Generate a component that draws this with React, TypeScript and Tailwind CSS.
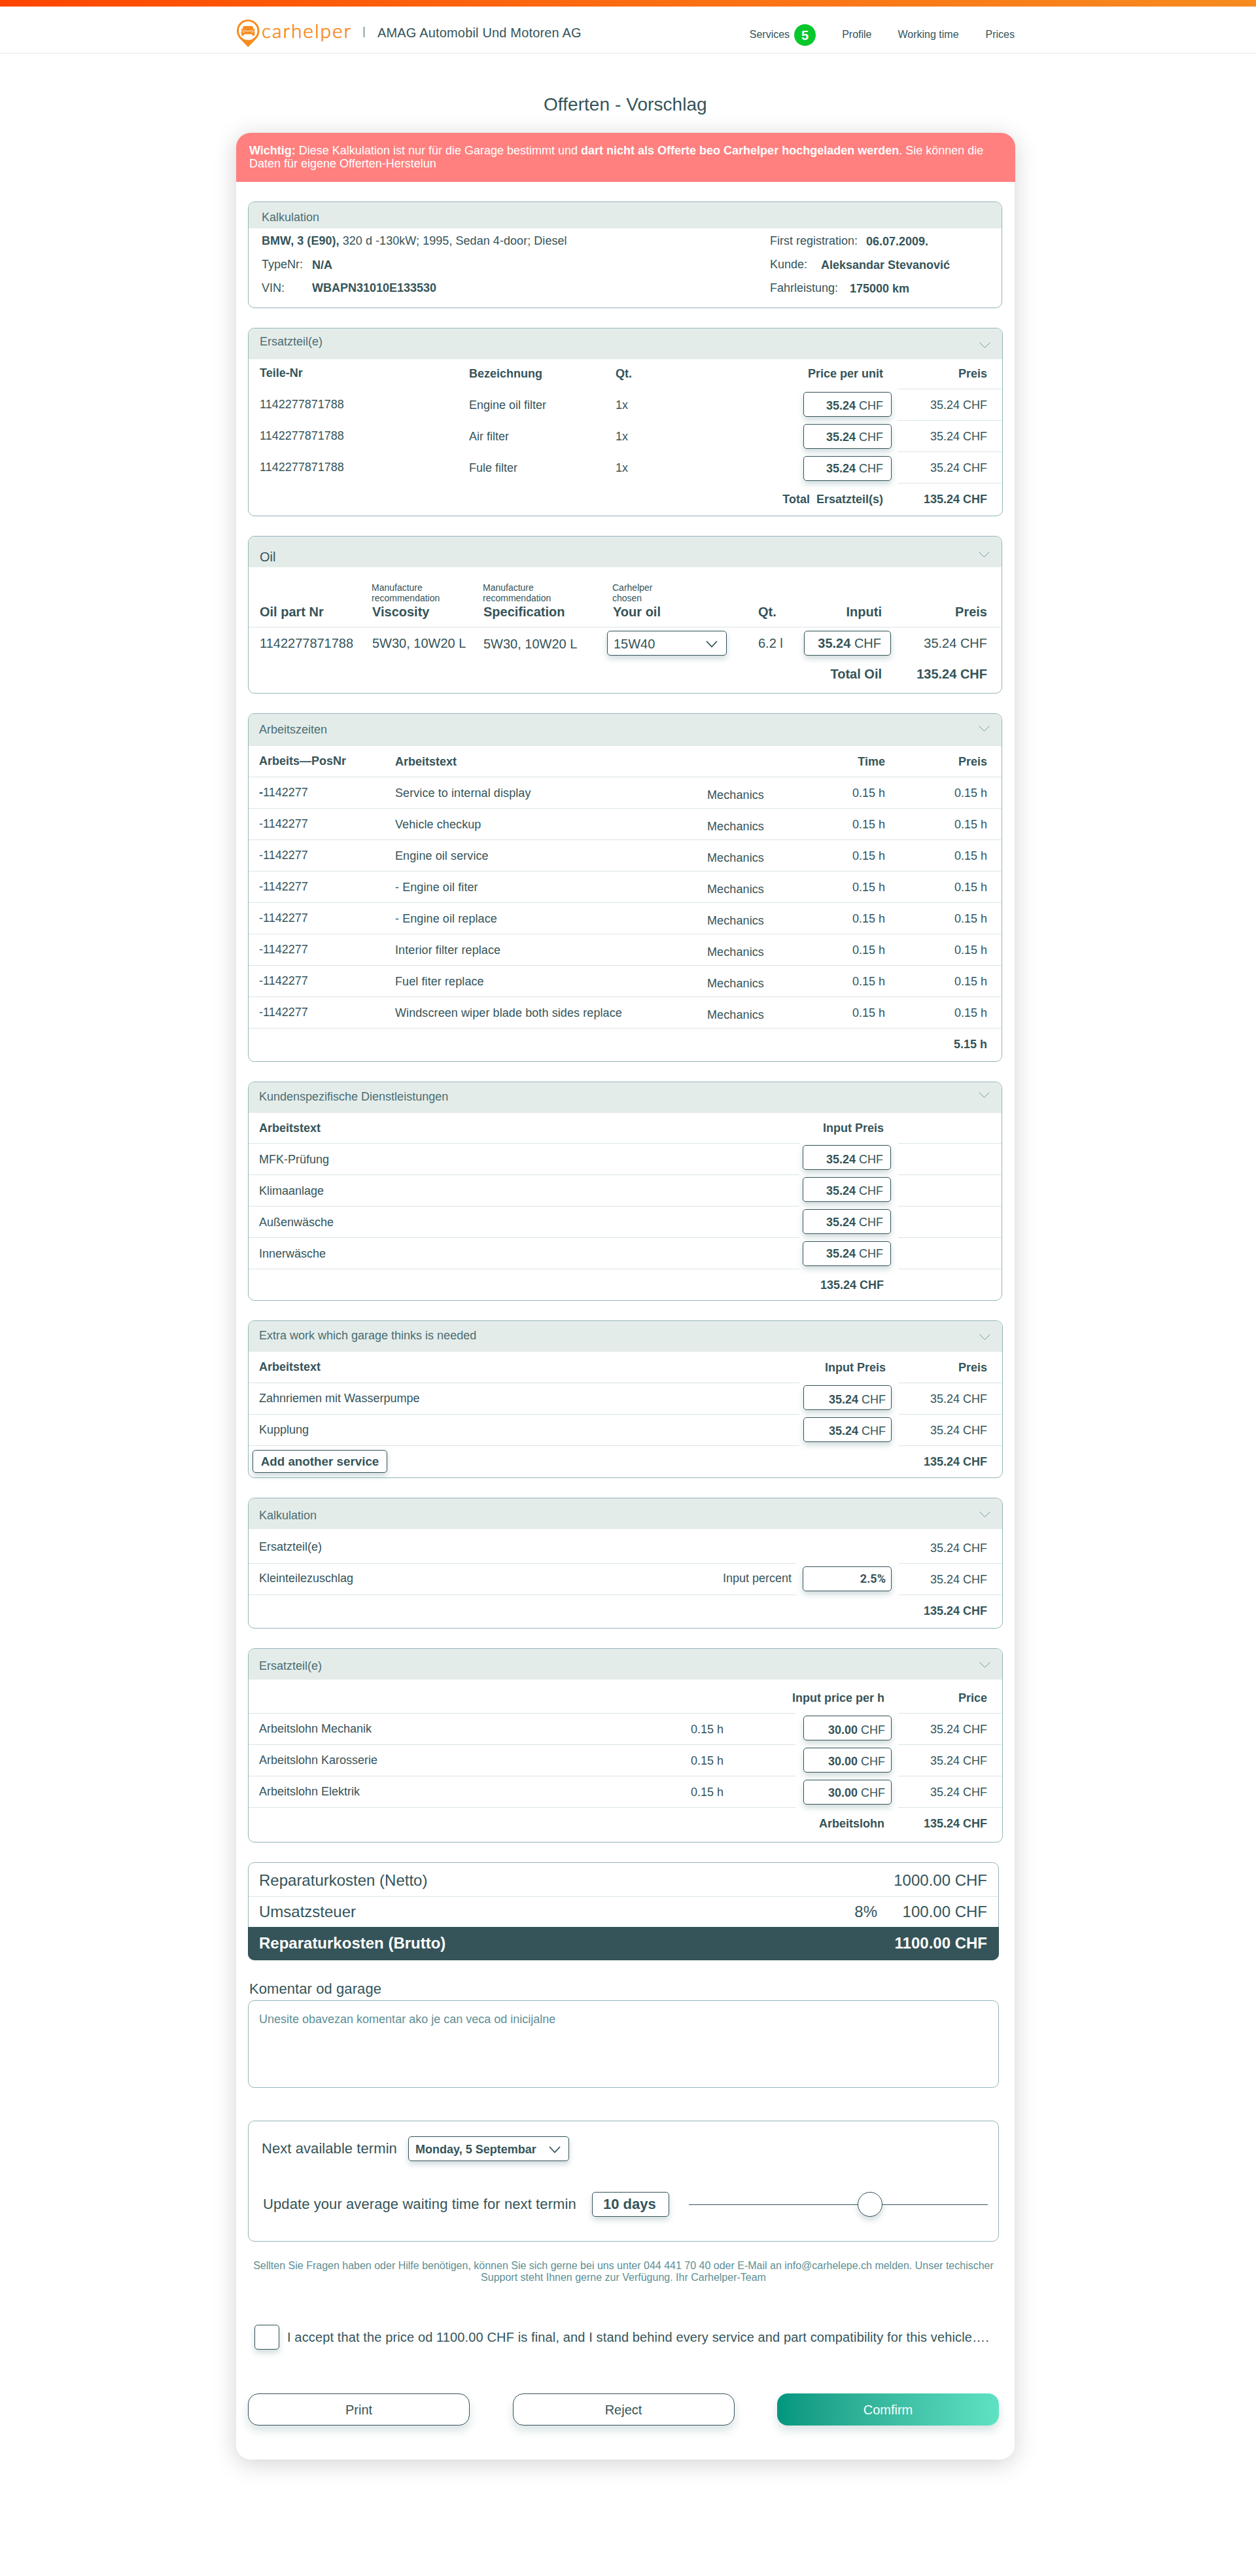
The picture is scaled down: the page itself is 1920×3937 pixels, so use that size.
import type { ReactNode } from "react";

type Children = { children?: ReactNode; className?: string };

function Logo() {
  return (
    <div className="flex items-start" aria-label="carhelper">
      <svg width="36" height="42" viewBox="0 0 36 42" className="mt-5">
        <path
          d="M18 0C8.3 0 1 7.4 1 16.9c0 6.3 3 10.4 6.6 14.2L18.3 42 29 31.1c3.500-3.800 6.500-7.900 6.500-14.200C35.500 7.400 27.700 0 18 0z"
          fill="#f68b1f"
        />
        <circle cx="18.200" cy="17" r="14.300" fill="#fff" />
        <path
          d="M11 10.500c.4-.5.9-.7 1.600-.7h11.200c.7 0 1.200.2 1.600.7l1.700 4.200 1.500-1v1.500l-1.200.8c.7 1 .9 1.900.9 3.200v4.300c0 .6-.4.9-1 .9h-2c-.6 0-1-.3-1-.9v-1.200H12.100v1.200c0 .6-.4.9-1 .9h-2c-.6 0-1-.3-1-.9v-4.300c0-1.300.2-2.200.9-3.200l-1.200-.8v-1.500l1.500 1z"
          fill="#f68b1f"
        />
        <path d="M11 15.500c4 3 10.400 3 14.400 0" fill="none" stroke="#fff" strokeWidth="1" />
        <path d="M9.800 18.200l3 1M26.600 18.200l-3 1" stroke="#fff" strokeWidth="1.100" />
      </svg>
      <span className="ml-[3px] mt-[17px] w-[136px] whitespace-nowrap font-['Lato'] text-[30px] font-light leading-[39px] tracking-[1.900px] text-[#f68b1f] [-webkit-text-stroke:0.700px_#f68b1f]">
        carhelper
      </span>
    </div>
  );
}

function ThinChevron({ className = "" }: { className?: string }) {
  return (
    <svg width="17" height="9" viewBox="0 0 17 9" className={className}>
      <path d="M0.500 0.500L8.500 8.300L16.500 0.500" fill="none" stroke="#5f9298" strokeWidth="0.900" />
    </svg>
  );
}

function SelectChevron({ className = "" }: { className?: string }) {
  return (
    <svg width="18" height="11" viewBox="0 0 18 11" className={className}>
      <path d="M1 1L9 9.500L17 1" fill="none" stroke="#355459" strokeWidth="1.800" />
    </svg>
  );
}

function Panel({ children, className = "" }: Children) {
  return <section className={`rounded-[10px] border border-[#94b4b8] ${className}`}>{children}</section>;
}

function PanelHeader({
  title,
  className = "h-[47px]",
  titleClass = "mt-3 pl-4",
  chevronClass,
}: {
  title: string;
  className?: string;
  titleClass?: string;
  chevronClass?: string;
}) {
  return (
    <header className={`flex items-start justify-between rounded-t-[9px] bg-[#e4ecea] pr-[18px] text-[#4a6e72] ${className}`}>
      <h2 className={`leading-5 ${titleClass}`}>{title}</h2>
      {chevronClass && <ThinChevron className={chevronClass} />}
    </header>
  );
}

function Box({ children, className = "" }: Children) {
  return (
    <div
      className={`h-[38px] shrink-0 rounded-[5px] border border-[#355459] bg-white shadow-[0_5px_8px_rgba(70,115,120,0.25)] ${className}`}
    >
      {children}
    </div>
  );
}

/* Line of a price table: name on the left, editable price, computed price. */
function PriceRow({
  cols = "grid-cols-[842px_1fr_158px]",
  row = "h-12 leading-[48px]",
  lined = true,
  left,
  mid,
  right,
}: {
  cols?: string;
  row?: string;
  lined?: boolean;
  left?: ReactNode;
  mid?: ReactNode;
  right?: ReactNode;
}) {
  const line = lined ? "border-t border-[#dae5e5]" : "";
  const blank = lined ? "border-t border-transparent" : "";
  return (
    <div className={`grid ${cols} ${row}`}>
      <div className={`min-w-0 pl-4 ${line}`}>{left}</div>
      <div className={`flex min-w-0 items-start justify-end whitespace-nowrap ${blank}`}>{mid}</div>
      <div className={`min-w-0 pr-[23px] text-right ${line}`}>{right}</div>
    </div>
  );
}

function PriceBox({ value, className }: { value: string; className: string }) {
  return (
    <Box className={`w-[135px] text-right ${className}`}>
      <b>{value}</b> CHF
    </Box>
  );
}

const parts = [
  { name: "Engine oil filter", box: "mr-[9px] mt-1 leading-[40px] pr-3" },
  { name: "Air filter", box: "mr-[9px] mt-[5px] leading-[38px] pr-3" },
  { name: "Fule filter", box: "mr-[9px] mt-1.5 leading-[36px] pr-3" },
];

const works = [
  "Service to internal display",
  "Vehicle checkup",
  "Engine oil service",
  "- Engine oil fiter",
  "- Engine oil replace",
  "Interior filter replace",
  "Fuel fiter replace",
  "Windscreen wiper blade both sides replace",
];

const services = [
  { name: "MFK-Prüfung", box: "mr-[11px] mt-0.5 leading-[42px] pr-[11px]" },
  { name: "Klimaanlage", box: "mr-[11px] mt-[3px] leading-[40px] pr-[11px]" },
  { name: "Außenwäsche", box: "mr-[11px] mt-1 leading-[38px] pr-[11px]" },
  { name: "Innerwäsche", box: "mr-[11px] mt-[5px] leading-[36px] pr-[11px]" },
];

const extras = [
  { name: "Zahnriemen mit Wasserpumpe", box: "mr-[11px] mt-[3px] leading-[42px] pr-2" },
  { name: "Kupplung", box: "mr-[11px] mt-1 leading-[40px] pr-2" },
];

const wages = [
  { name: "Arbeitslohn Mechanik", box: "mr-[10px] mt-[3px] leading-[42px] pr-[9px]" },
  { name: "Arbeitslohn Karosserie", box: "mr-[10px] mt-1 leading-[40px] pr-[9px]" },
  { name: "Arbeitslohn Elektrik", box: "mr-[10px] mt-[5px] leading-[38px] pr-[9px]" },
];

const partCols = "grid-cols-[842px_1fr_160px]";
const wageCols = "grid-cols-[836px_1fr_159px]";

function OilHead({ note, label, className = "" }: { note: ReactNode; label: string; className?: string }) {
  return (
    <div className={className}>
      <div className="-ml-px -mt-px text-[14px] font-normal leading-4">{note}</div>
      <div className="mt-px leading-6">{label}</div>
    </div>
  );
}

export default function App() {
  return (
    <div className="min-h-[3937px] w-[1920px] bg-white font-['Liberation_Sans',Arial,sans-serif] text-[18px] text-[#355459]">
      <div className="h-2.5 bg-gradient-to-r from-[#ff4500] to-[#f68b1f]" />
      <header className="flex h-[72px] items-start border-b border-[#e8ebeb] pl-[361px] pr-[369px]">
        <Logo />
        <div className="ml-5 mt-[31px] h-4 w-px bg-[#355459]" />
        <div className="ml-5 mt-7 text-[20px] leading-6 tracking-[0.170px]">AMAG Automobil Und Motoren AG</div>
        <nav className="ml-auto mt-[33px] flex items-start text-[16px] leading-5">
          <span>Services</span>
          <span className="-mt-1.5 ml-[7px] flex h-[33px] w-[33px] items-center justify-center rounded-full bg-[#08c72c] text-[20px] font-bold text-white">
            5
          </span>
          <span className="ml-10">Profile</span>
          <span className="ml-10">Working time</span>
          <span className="ml-[41px]">Prices</span>
        </nav>
      </header>

      <h1 className="h-[121px] pl-[831px] pt-[62px] text-[28px] leading-8 tracking-[0.060px]">Offerten - Vorschlag</h1>

      <main className="ml-[361px] h-[3556px] w-[1190px] rounded-[22px] bg-white shadow-[0_6px_36px_rgba(0,0,0,0.18)]">
        <div className="h-[75px] w-[1191px] rounded-t-[22px] bg-[#ff807f] pl-5 pr-10 pt-[17px] leading-5 text-white">
          <b>Wichtig:</b> Diese Kalkulation ist nur für die Garage bestimmt und{" "}
          <b>dart nicht als Offerte beo Carhelper hochgeladen werden</b>. Sie können die
          <br />
          Daten für eigene Offerten-Herstelun
        </div>

        <div className="flex flex-col gap-[30px] pl-[18px] pt-[30px]">
          <Panel className="h-[163px] w-[1153px]">
            <PanelHeader title="Kalkulation" className="h-10" titleClass="mt-[13px] pl-5" />
            <div className="flex justify-between pl-5 pr-[31px] pt-[9px] leading-5">
              <div className="flex flex-col gap-4">
                <div className="tracking-[0.050px]">
                  <b>BMW, 3 (E90),</b> 320 d -130kW; 1995, Sedan 4-door; Diesel
                </div>
                <div className="flex">
                  <span className="w-[77px]">TypeNr:</span>
                  <b className="mt-px -mb-px">N/A</b>
                </div>
                <div className="flex">
                  <span className="w-[77px]">VIN:</span>
                  <b>WBAPN31010E133530</b>
                </div>
              </div>
              <div className="flex w-[323px] flex-col gap-4">
                <div className="flex">
                  <span className="w-[147px]">First registration:</span>
                  <b className="mt-px -mb-px">06.07.2009.</b>
                </div>
                <div className="flex">
                  <span className="w-[78px]">Kunde:</span>
                  <b className="mt-px -mb-px">Aleksandar Stevanović</b>
                </div>
                <div className="flex">
                  <span className="w-[122px]">Fahrleistung:</span>
                  <b className="mt-px -mb-px">175000 km</b>
                </div>
              </div>
            </div>
          </Panel>

          <Panel className="h-[288px] w-[1154px]">
            <PanelHeader title="Ersatzteil(e)" titleClass="mt-2.5 pl-[17px]" chevronClass="mt-[21px]" />
            <PriceRow
              cols={partCols}
              row="h-[45px] leading-[44px] font-bold"
              lined={false}
              left={
                <div className="flex pl-px">
                  <span className="-mt-px w-[320px]">Teile-Nr</span>
                  <span className="w-[224px]">Bezeichnung</span>
                  <span>Qt.</span>
                </div>
              }
              mid={<span className="pr-[22px]">Price per unit</span>}
              right="Preis"
            />
            {parts.map((part) => (
              <div key={part.name} className="grid h-12 grid-cols-[842px_1fr_160px] leading-[48px]">
                <div className="flex pl-[17px] pt-px">
                  <span className="-mt-px w-[320px]">1142277871788</span>
                  <span className="w-[224px]">{part.name}</span>
                  <span>1x</span>
                </div>
                <div className="flex items-start justify-end pt-px">
                  <PriceBox value="35.24" className={part.box} />
                </div>
                <div className="border-t border-[#dae5e9] pr-[23px] text-right">35.24 CHF</div>
              </div>
            ))}
            <div className="grid h-12 grid-cols-[1fr_160px] font-bold leading-[48px]">
              <div className="whitespace-pre pr-[22px] pt-px text-right">Total  Ersatzteil(s)</div>
              <div className="border-t border-[#dae5e9] pr-[23px] text-right">135.24 CHF</div>
            </div>
          </Panel>

          <Panel className="h-[241px] w-[1153px] text-[20px]">
            <PanelHeader
              title="Oil"
              titleClass="mt-[21px] pl-[17px] text-[#355459]"
              chevronClass="mt-[23px]"
            />
            <div className="flex h-[91px] items-start pl-[17px] pr-[22px] pt-6 font-bold leading-6">
              <span className="mt-8 w-[172px]">Oil part Nr</span>
              <OilHead className="w-[170px]" label="Viscosity" note={<>Manufacture<br />recommendation</>} />
              <OilHead className="w-[198px]" label="Specification" note={<>Manufacture<br />recommendation</>} />
              <OilHead className="w-[222px]" label="Your oil" note={<>Carhelper<br />chosen</>} />
              <span className="mt-8">Qt.</span>
              <span className="ml-auto mt-8 w-[100px] text-right">Inputi</span>
              <span className="mt-8 w-[161px] text-right">Preis</span>
            </div>
            <div className="flex h-12 items-start border-t border-[#dae5e5] pl-[17px] pr-[22px] leading-[48px]">
              <span className="w-[172px]">1142277871788</span>
              <span className="w-[170px]">5W30, 10W20 L</span>
              <span className="mt-px w-[189px]">5W30, 10W20 L</span>
              <Box className="mt-[5px] flex w-[183px] items-start justify-between pl-[9px] pr-[13px] leading-[38px]">
                15W40
                <SelectChevron className="mt-[14px]" />
              </Box>
              <span className="ml-12">6.2 l</span>
              <Box className="ml-auto mt-[5px] w-[133px] pr-[14px] text-right leading-[36px]">
                <b>35.24</b> CHF
              </Box>
              <span className="w-[147px] text-right">35.24 CHF</span>
            </div>
            <div className="flex justify-end pr-[22px] font-bold leading-[48px]">
              <span>Total Oil</span>
              <span className="w-[161px] text-right">135.24 CHF</span>
            </div>
          </Panel>

          <Panel className="h-[533px] w-[1153px]">
            <PanelHeader title="Arbeitszeiten" className="h-12" titleClass="mt-[14px] pl-4" chevronClass="mt-[18px]" />
            <div className="grid h-12 grid-cols-[208px_477px_1fr_156px] border-t border-[#dae5e5] pl-4 pr-[22px] font-bold leading-[48px]">
              <span className="-mt-px">Arbeits—PosNr</span>
              <span>Arbeitstext</span>
              <span className="text-right">Time</span>
              <span className="text-right">Preis</span>
            </div>
            {works.map((work, i) => (
              <div
                key={work}
                className="grid h-12 grid-cols-[208px_477px_1fr_156px] border-t border-[#dae5e5] pl-4 pr-[22px] leading-[48px]"
              >
                <span className="-mt-px">
                  {i === 0 ? <b>-</b> : "-"}1142277
                </span>
                <span className="tracking-[0.090px]">{work}</span>
                <span className="flex justify-between">
                  <span className="mt-[3px] tracking-[0.100px]">Mechanics</span>
                  <span>0.15 h</span>
                </span>
                <span className="text-right">0.15 h</span>
              </div>
            ))}
            <div className="border-t border-[#dae5e5] pr-[22px] text-right font-bold leading-[48px]">5.15 h</div>
          </Panel>

          <Panel className="h-[335px] w-[1153px]">
            <PanelHeader title="Kundenspezifische Dienstleistungen" chevronClass="mt-[15px]" />
            <PriceRow
              row="h-[46px] leading-[46px] font-bold"
              lined={false}
              left="Arbeitstext"
              mid={<span className="pr-[22px]">Input Preis</span>}
            />
            {services.map((service) => (
              <PriceRow key={service.name} left={service.name} mid={<PriceBox value="35.24" className={service.box} />} />
            ))}
            <PriceRow mid={<b className="pr-[22px]">135.24 CHF</b>} />
          </Panel>

          <Panel className="h-[241px] w-[1154px]">
            <PanelHeader title="Extra work which garage thinks is needed" chevronClass="mt-5" />
            <PriceRow
              row="h-[47px] leading-[48px] font-bold"
              lined={false}
              left={<div className="-mt-px">Arbeitstext</div>}
              mid={<span className="pr-5">Input Preis</span>}
              right="Preis"
            />
            {extras.map((extra) => (
              <PriceRow
                key={extra.name}
                left={<div className="-mt-px">{extra.name}</div>}
                mid={<PriceBox value="35.24" className={extra.box} />}
                right="35.24 CHF"
              />
            ))}
            <PriceRow
              left={
                <button className="-ml-2.5 mt-1.5 block h-[35px] w-[206px] whitespace-nowrap rounded-[5px] border border-[#355459] bg-white text-[18.800px] font-bold leading-[34px] shadow-[0_5px_8px_rgba(70,115,120,0.25)]">
                  Add another service
                </button>
              }
              right={<b>135.24 CHF</b>}
            />
          </Panel>

          <Panel className="h-[200px] w-[1154px]">
            <PanelHeader title="Kalkulation" titleClass="mt-4 pl-4" chevronClass="mt-5" />
            <PriceRow
              row="h-[52px] leading-[54px]"
              lined={false}
              left="Ersatzteil(e)"
              right={<div className="mt-0.5">35.24 CHF</div>}
            />
            <PriceRow
              cols="grid-cols-[838px_1fr_158px]"
              left={
                <div className="-mt-0.5 flex justify-between pr-2">
                  <span>Kleinteilezuschlag</span>
                  <span>Input percent</span>
                </div>
              }
              mid={
                <Box className="mr-[11px] mt-1 w-[136px] pr-2 text-right font-['Roboto'] font-bold leading-[36px]">
                  2.5%
                </Box>
              }
              right="35.24 CHF"
            />
            <PriceRow cols="grid-cols-[838px_1fr_158px]" right={<b>135.24 CHF</b>} />
          </Panel>

          <Panel className="h-[297px] w-[1154px]">
            <PanelHeader title="Ersatzteil(e)" titleClass="mt-4 pl-4" chevronClass="mt-5" />
            <PriceRow
              row="h-[51px] leading-[56px] font-bold"
              lined={false}
              cols={wageCols}
              mid={<span className="pr-[21px]">Input price per h</span>}
              right="Price"
            />
            {wages.map((wage) => (
              <PriceRow
                key={wage.name}
                cols={wageCols}
                left={
                  <div className="flex justify-between pr-[110px]">
                    <span className="-mt-px">{wage.name}</span>
                    <span>0.15 h</span>
                  </div>
                }
                mid={<PriceBox value="30.00" className={wage.box} />}
                right="35.24 CHF"
              />
            ))}
            <PriceRow cols={wageCols} mid={<b className="pr-[21px]">Arbeitslohn</b>} right={<b>135.24 CHF</b>} />
          </Panel>

          <Panel className="h-[150px] w-[1148px] text-[24px]">
            <div className="flex h-[51px] justify-between pl-4 pr-[17px] pt-[3px] leading-[48px]">
              <span>Reparaturkosten (Netto)</span>
              <span>1000.00 CHF</span>
            </div>
            <div className="flex h-[47px] border-t border-[#dae5e9] pl-4 pr-[17px] leading-[46px]">
              <span>Umsatzsteuer</span>
              <span className="ml-auto">8%</span>
              <span className="w-[168px] text-right">100.00 CHF</span>
            </div>
            <div className="-mx-px flex h-[51px] justify-between rounded-b-[10px] bg-[#355459] pl-[17px] pr-[18px] font-bold leading-[50px] text-white">
              <span>Reparaturkosten (Brutto)</span>
              <span>1100.00 CHF</span>
            </div>
          </Panel>
        </div>

        <div className="pl-[18px]">
          <label className="mt-[30px] block h-[31px] pl-0.5 text-[22px] leading-[26px]">
            <span className="block pt-px tracking-[0.080px]">Komentar od garage</span>
          </label>
          <div className="h-[134px] w-[1148px] rounded-[10px] border border-[#94b4b8] pl-4 pt-[18px] leading-5 text-[#5d8f95]">
            Unesite obavezan komentar ako je can veca od inicijalne
          </div>

          <div className="mt-[50px] h-[185px] w-[1148px] rounded-[10px] border border-[#94b4b8] pl-5 pr-4 pt-[23px] text-[22px]">
            <div className="flex h-[38px] items-start leading-[38px]">
              <span className="w-[224px] tracking-[0.070px]">Next available termin</span>
              <Box className="flex w-[246px] justify-between pl-2.5 pr-3 text-[18px] font-bold leading-[38px]">
                Monday, 5 Septembar
                <SelectChevron className="mt-[14px]" />
              </Box>
            </div>
            <div className="mt-[47px] flex h-[38px] items-start leading-[38px]">
              <span className="w-[505px] pl-0.5 tracking-[0.090px]">
                Update your average waiting time for next termin
              </span>
              <Box className="w-[118px] pl-4 font-bold leading-[36px]">10 days</Box>
              <div className="ml-[30px] flex h-[38px] w-[457px] items-center">
                <div className="h-px w-[258px] bg-[#355459]" />
                <div className="h-[38px] w-[38px] rounded-full border border-[#355459] bg-white shadow-[0_5px_8px_rgba(70,115,120,0.25)]" />
                <div className="h-px flex-1 bg-[#355459]" />
              </div>
            </div>
          </div>

          <p className="mt-[28px] w-[1148px] text-center text-[16px] leading-[18px] text-[#5d8f95]">
            Sellten Sie Fragen haben oder Hilfe benötigen, können Sie sich gerne bei uns unter 044 441 70 40 oder E-Mail an
            info@carhelepe.ch melden. Unser techischer
            <br />
            Support steht Ihnen gerne zur Verfügung. Ihr Carhelper-Team
          </p>

          <div className="mt-[63px] flex h-[38px] items-start pl-2.5">
            <Box className="w-[38px]" />
            <span className="ml-3 mt-[7px] whitespace-nowrap text-[20px] leading-6 tracking-[0.130px]">
              I accept that the price od 1100.00 CHF is final, and I stand behind every service and part compatibility for this
              vehicle….
            </span>
          </div>

          <div className="mt-[67px] flex w-[1148px] justify-between text-[20px] leading-6">
            <button className="h-[49px] w-[339px] rounded-2xl border border-[#355459] bg-white shadow-[0_8px_14px_rgba(70,115,120,0.2)]">
              Print
            </button>
            <button className="h-[49px] w-[339px] rounded-2xl border border-[#355459] bg-white shadow-[0_8px_14px_rgba(70,115,120,0.2)]">
              Reject
            </button>
            <button className="h-[49px] w-[339px] rounded-2xl bg-gradient-to-r from-[#00967f] to-[#5fe2c4] text-white shadow-[0_8px_14px_rgba(70,115,120,0.2)]">
              Comfirm
            </button>
          </div>
        </div>
      </main>
    </div>
  );
}
